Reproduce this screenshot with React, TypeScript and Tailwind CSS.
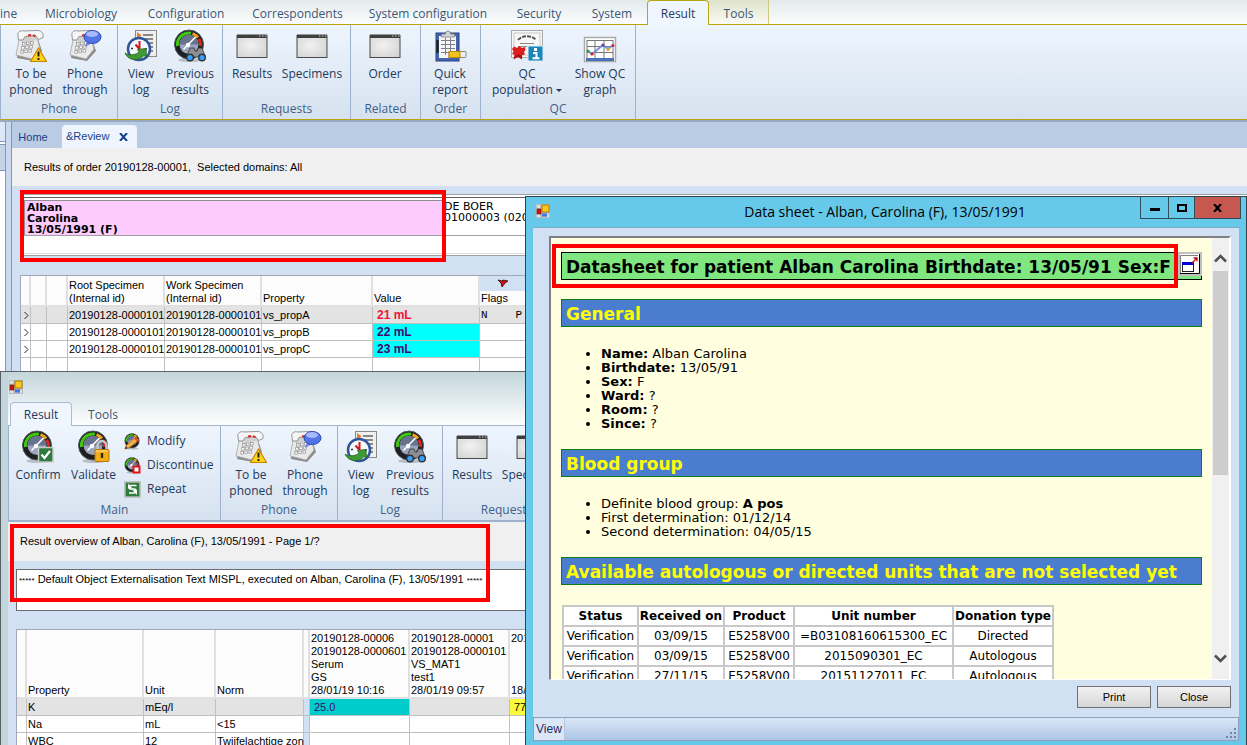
import React from "react";

type Kids = { children?: React.ReactNode };

/* ---------- icons ---------- */

function PhoneBase() {
  return (
    <>
      <path d="M5 13 L24 10 L28 22 L19 32 L3 29 Z" fill="#8b8b8b" />
      <path d="M5 11 L23 8 L26 20 L18 30 L2 26 Z" fill="#e9e9e9" stroke="#a6a6a6" strokeWidth="0.8" />
      <path d="M7 7 L22 5 L24 11 L8 13 Z" fill="#cfcfcf" />
      <path d="M4 7 C3 3 6 1 10 2 L22 1.500 C27 1 30 4 29 8.500 L24.500 10.500 L21.500 6.500 L11 7.500 L9 11 L4.500 11 Z" fill="#f6f6f6" stroke="#8a8a8a" strokeWidth="0.9" />
      <path d="M14 6.500 l3 -0.500 M19 6 l2.500 1.500" stroke="#d22" strokeWidth="2" />
      <g fill="#fff" stroke="#8d8d8d" strokeWidth="0.7">
        {[0, 1, 2].map((r) =>
          [0, 1, 2].map((c) => <rect key={`${r}${c}`} x={8.5 + c * 4 - r * 0.8} y={13.5 + r * 4 - c * 0.5} width="2.600" height="2.600" />)
        )}
      </g>
    </>
  );
}
function PhoneWarn() {
  return (
    <svg width="34" height="34" viewBox="0 0 34 34" aria-hidden="true">
      <PhoneBase />
      <path d="M24.500 19 L32.500 32.500 L16.500 32.500 Z" fill="#ffd21c" stroke="#c98500" strokeWidth="1.2" strokeLinejoin="round" />
      <path d="M24.500 22.500 v5 M24.500 29 v2" stroke="#222" strokeWidth="2" />
    </svg>
  );
}
function PhoneTalk() {
  return (
    <svg width="34" height="34" viewBox="0 0 34 34" aria-hidden="true">
      <PhoneBase />
      <path d="M19 12 L17 18 L24 14 Z" fill="#6b86e8" />
      <ellipse cx="24.500" cy="8" rx="8.500" ry="6.500" fill="#5374e6" stroke="#2c49b4" />
      <ellipse cx="24" cy="5" rx="6" ry="3" fill="#bccbff" opacity="0.8" />
    </svg>
  );
}
function ViewLog() {
  return (
    <svg width="34" height="34" viewBox="0 0 34 34" aria-hidden="true">
      <rect x="11.500" y="1.500" width="21" height="26" fill="#efefef" stroke="#8a8a8a" />
      <path d="M19 6 h10 M20 10 h9 M23 14 h6 M25 18 h4 M25 22 h4" stroke="#666" strokeWidth="1.300" />
      <path d="M13 3 l4.500 3.500 l-4.500 3.500 Z" fill="#ee7a1a" />
      <circle cx="15" cy="20" r="11" fill="#f5f8fc" stroke="#31549b" strokeWidth="2.500" />
      <path d="M15.500 20 V12 M15.500 20 L11.500 15.500" stroke="#d21919" strokeWidth="2" />
      <path d="M7 19.500 h2 M21 20 h2 M15 29 v-2" stroke="#333" strokeWidth="1.500" />
      <path d="M1 24 C5 27 12 26 15 23 L13.500 20.500 L22 19.500 L22.500 28 L20 26.500 C15 32.500 4 32 1 24 Z" fill="#3f9a35" stroke="#206a1c" strokeWidth="0.8" />
    </svg>
  );
}
function GaugeFace() {
  return (
    <>
      <ellipse cx="17" cy="31" rx="12" ry="2" fill="#000" opacity="0.2" />
      <circle cx="16" cy="15.500" r="14.500" fill="#1d1f22" stroke="#55585e" />
      <circle cx="16" cy="15.500" r="9.500" fill="#9aa5bd" />
      <path d="M6.500 15.500 A9.500 9.500 0 0 1 25.500 15.500 Z" fill="#66728e" />
      <path d="M4.500 17 A11.500 11.500 0 0 1 18 4.200" fill="none" stroke="#3fc714" strokeWidth="3" />
      <path d="M19.500 4.600 A11.500 11.500 0 0 1 25 8.500" fill="none" stroke="#f5a41a" strokeWidth="3" />
      <path d="M25.800 9.800 A11.500 11.500 0 0 1 27.500 17" fill="none" stroke="#df2419" strokeWidth="3" />
      <path d="M10.500 20.500 L22.500 8" stroke="#fff" strokeWidth="1.600" />
      <circle cx="15" cy="16" r="2.200" fill="#fff" />
    </>
  );
}
function GaugeBino() {
  return (
    <svg width="34" height="34" viewBox="0 0 34 34" aria-hidden="true">
      <GaugeFace />
      <path d="M13.500 28 L17 19 h4 l1 3 h2 l1 -3 h4 L32.500 28 Z" fill="#8d9097" stroke="#333" strokeWidth="0.800" />
      <circle cx="17" cy="28.500" r="4" fill="#333" />
      <circle cx="29" cy="28.500" r="4" fill="#333" />
      <circle cx="17" cy="28.500" r="2.600" fill="#35a0ff" />
      <circle cx="29" cy="28.500" r="2.600" fill="#35a0ff" />
    </svg>
  );
}
function GaugeCheck() {
  return (
    <svg width="34" height="34" viewBox="0 0 34 34" aria-hidden="true">
      <GaugeFace />
      <rect x="17.500" y="17.500" width="14.500" height="14.500" fill="#2f7a40" stroke="#c7ccc7" strokeWidth="1.500" />
      <path d="M20.500 24.500 l3 3.500 l5.500 -7" fill="none" stroke="#fff" strokeWidth="2.200" />
    </svg>
  );
}
function GaugeLock() {
  return (
    <svg width="34" height="34" viewBox="0 0 34 34" aria-hidden="true">
      <GaugeFace />
      <path d="M20.500 20 v-4 a4.500 5 0 0 1 9 0 v4" fill="none" stroke="#c3c7cd" strokeWidth="2.500" />
      <rect x="18" y="19.500" width="14" height="12" rx="1" fill="#f0ae1c" stroke="#b87906" />
      <path d="M19 21 h12" stroke="#ffe08a" />
      <path d="M25 23 v5" stroke="#3a2a00" strokeWidth="2.400" />
    </svg>
  );
}
function GaugePen() {
  return (
    <svg width="17" height="17" viewBox="0 0 34 34" aria-hidden="true">
      <GaugeFace />
      <path d="M2 32 L5 24 L24 8 L30 14 L10 30 Z" fill="#f4b23b" stroke="#a14a12" strokeWidth="1.500" />
      <path d="M2 32 L4 27 L7 30 Z" fill="#222" />
      <path d="M22 10 L28 16" stroke="#e2403a" strokeWidth="4" />
    </svg>
  );
}
function GaugeStop() {
  return (
    <svg width="17" height="17" viewBox="0 0 34 34" aria-hidden="true">
      <GaugeFace />
      <rect x="17" y="17" width="16" height="16" fill="#e01414" />
      <rect x="21" y="21" width="8" height="8" fill="#fff" />
    </svg>
  );
}
function RepeatIcon() {
  return (
    <svg width="17" height="17" viewBox="0 0 17 17" aria-hidden="true">
      <rect x="1" y="1" width="15" height="15" fill="#2f7a3d" stroke="#b4bbb4" strokeWidth="1.500" />
      <path d="M12.500 4.500 H7 a1.800 1.800 0 0 0 0 3.600 h3 a2 2 0 0 1 0 4 H5" fill="none" stroke="#fff" strokeWidth="1.500" />
      <path d="M4 2.500 v5 h4.500 Z M13 14 v-5 h-4.500 Z" fill="#fff" />
    </svg>
  );
}
function WindowIcon() {
  return (
    <svg width="34" height="34" viewBox="0 0 34 34" aria-hidden="true">
      <defs>
        <radialGradient id="pane" cx="0.45" cy="0.45" r="0.75">
          <stop offset="0" stopColor="#f2f2f2" />
          <stop offset="1" stopColor="#d0d0d0" />
        </radialGradient>
      </defs>
      <rect x="2" y="6.500" width="30" height="22" fill="url(#pane)" stroke="#4a4a4a" />
      <path d="M2 5.500 h30 v3.500 h-30 Z" fill="#3f3f3f" />
      <path d="M24 7 h1.500 M27 7 h1.500 M30 7 h1.500" stroke="#ccc" />
    </svg>
  );
}
function Clipboard() {
  return (
    <svg width="34" height="34" viewBox="0 0 34 34" aria-hidden="true">
      <rect x="3" y="4" width="23" height="28" fill="#4465ae" stroke="#27417f" />
      <rect x="6" y="7" width="17" height="22" fill="#f6f6f6" />
      <path d="M8 11.500 h14 M8 15.500 h14 M8 19.500 h14 M8 23.500 h10 M12.500 9 v17 M17.500 9 v14" stroke="#7a7f8a" />
      <path d="M8.500 8 V5 h4 a2.500 3 0 0 1 5 0 h4 V8 Z" fill="#d4d7dc" stroke="#777" strokeWidth="0.800" />
      <path d="M4.500 11 v13" stroke="#222" strokeWidth="2.500" />
      <rect x="16" y="22.500" width="17" height="6" rx="1" fill="#eee" stroke="#8a8a8a" />
      <rect x="16" y="22.500" width="11" height="6" fill="#f2c21d" stroke="#b88a08" />
    </svg>
  );
}
function Certificate() {
  return (
    <svg width="34" height="34" viewBox="0 0 34 34" aria-hidden="true">
      <rect x="1.500" y="1.500" width="31" height="27" fill="#f7f7f7" stroke="#a9a9a9" />
      <rect x="4" y="4" width="26" height="22" fill="none" stroke="#c6c6c6" />
      <path d="M8 11 C12 6 22 6 26 11" fill="none" stroke="#555" strokeWidth="2" strokeDasharray="4 1" />
      <path d="M10 14.500 h14 M8 17.500 h9" stroke="#888" />
      <path d="M5 24 L3.500 30.500 L8 28 L12 30.500 L12 24 Z" fill="#b50f0f" />
      <path d="M2 20 l2 -2.500 l3 1.500 l2 -2 l3 2 l3 -1 l0.500 3 l-1.500 2 l1 2.500 l-4 1 l-2 -1.500 l-3 1.500 l-4 -1.500 l1.500 -2.500 Z" fill="#dc1e1e" />
      <rect x="18" y="17" width="15" height="15" fill="#1a86bd" stroke="#ddeaf2" />
      <path d="M25.500 19 v3" stroke="#fff" strokeWidth="3" />
      <path d="M23 24 h3.500 v5 M22.500 29.300 h7" fill="none" stroke="#fff" strokeWidth="2" />
    </svg>
  );
}
function Chart() {
  return (
    <svg width="34" height="34" viewBox="0 0 34 34" aria-hidden="true">
      <rect x="1.500" y="8.500" width="31" height="24" fill="#fff" stroke="#aaa" strokeWidth="1.500" />
      <rect x="3" y="29" width="28" height="3" fill="#4a73b9" />
      <path d="M4 11.500 h26 M4 17.500 h26 M4 23.500 h26 M4 11 v18 M12 11 v18 M21 11 v18 M30 11 v18" stroke="#777" />
      <path d="M5 22 L9 25 L20 16 L25 20 L30 16" fill="none" stroke="#6c8fd6" strokeWidth="1.800" />
      <circle cx="5" cy="22" r="1.600" fill="#2b9e3f" />
      <circle cx="9" cy="25" r="1.600" fill="#d22" />
      <circle cx="20" cy="16" r="1.600" fill="#7a3fa8" />
      <circle cx="25" cy="20.500" r="1.600" fill="#f0a818" />
      <circle cx="30" cy="16.500" r="1.600" fill="#d2285a" />
    </svg>
  );
}
function AppIcon() {
  return (
    <svg width="14" height="14" viewBox="0 0 14 14" aria-hidden="true">
      <path d="M0 0 h14 v14 h-14 Z" fill="#bdbdbd" />
      <path d="M1 1 h3 v3 h-3 Z M1 10 h3 v3 h-3 Z M11 10 h2 v3 h-2 Z" fill="#dbe3e6" />
      <rect x="1" y="5" width="4" height="5" fill="#c11a0e" stroke="#7d0d06" strokeWidth="0.600" />
      <rect x="6" y="1" width="7" height="7" fill="#f9c81d" stroke="#b07d00" />
      <rect x="6" y="9.500" width="5" height="3" fill="#3c78ec" />
    </svg>
  );
}

/* ---------- ribbon ---------- */

function BigButton({ icon, label, width }: { icon: React.ReactNode; label: React.ReactNode; width: string }) {
  return (
    <button type="button" className={`flex shrink-0 flex-col items-center text-xs leading-4 ${width}`}>
      {icon}
      <span className="mt-[3px] whitespace-nowrap text-[#1e395b]">{label}</span>
    </button>
  );
}
function Group({ title, width, children }: Kids & { title: string; width: string }) {
  return (
    <section
      aria-label={title}
      className={`flex shrink-0 flex-col justify-between border-r border-[#9fb2cd] bg-linear-to-b from-[#eef5fd] to-[#d6e2f0] ${width}`}
    >
      <div className="flex pt-1">{children}</div>
      <h2 className="pb-0.5 text-center text-xs leading-4 text-[#3f5f86]">{title}</h2>
    </section>
  );
}
const TwoLines = ({ a, b }: { a: string; b: React.ReactNode }) => (
  <>
    {a}
    <br />
    {b}
  </>
);

function SharedGroups() {
  return (
    <>
      <Group title="Phone" width="w-[117px]">
        <BigButton icon={<PhoneWarn />} width="w-[60px]" label={<TwoLines a="To be" b="phoned" />} />
        <BigButton icon={<PhoneTalk />} width="w-[48px]" label={<TwoLines a="Phone" b="through" />} />
      </Group>
      <Group title="Log" width="w-[105px]">
        <BigButton icon={<ViewLog />} width="w-[46px]" label={<TwoLines a="View" b="log" />} />
        <BigButton icon={<GaugeBino />} width="w-[52px]" label={<TwoLines a="Previous" b="results" />} />
      </Group>
      <Group title="Requests" width="w-[128px]">
        <BigButton icon={<WindowIcon />} width="w-[58px]" label="Results" />
        <BigButton icon={<WindowIcon />} width="w-[62px]" label="Specimens" />
      </Group>
    </>
  );
}

const menuTabs = [
  { label: "ine", width: "w-[30px] justify-start!" },
  { label: "Microbiology", width: "w-[102px]" },
  { label: "Configuration", width: "w-[108px]" },
  { label: "Correspondents", width: "w-[115px]" },
  { label: "System configuration", width: "w-[146px]" },
  { label: "Security", width: "w-[76px]" },
  { label: "System", width: "w-[70px]" },
];

function MainRibbon() {
  return (
    <header className="font-['Open_Sans',sans-serif]">
      <nav className="flex h-[25px] border-b border-[#b8a70c] bg-linear-to-b from-[#e3eaec] to-[#fcfdfd] text-xs text-[#3c5676]">
        {menuTabs.map((t) => (
          <button type="button" key={t.label} className={`flex shrink-0 items-center justify-center whitespace-nowrap pt-1 ${t.width}`}>
            {t.label}
          </button>
        ))}
        <button type="button" className="-mb-px w-[62px] rounded-t-sm border border-b-0 border-[#b8a70c] bg-[#f0f6fe] pt-0.5 text-[#1e395b]">
          Result
        </button>
        <button type="button" className="w-[60px] border-r border-[#cfc97a] bg-linear-to-b from-[#dfe3cb] to-[#fafbf4] pt-1">
          Tools
        </button>
      </nav>
      <div className="flex h-[95px] border-b border-l border-b-[#b8a70c] border-l-[#9fb2cd] bg-linear-to-b from-[#eef5fd] to-[#d6e2f0]">
        <SharedGroups />
        <Group title="Related" width="w-[70px]">
          <BigButton icon={<WindowIcon />} width="w-[68px]" label="Order" />
        </Group>
        <Group title="Order" width="w-[60px]">
          <BigButton icon={<Clipboard />} width="w-[58px]" label={<TwoLines a="Quick" b="report" />} />
        </Group>
        <Group title="QC" width="w-[155px]">
          <BigButton
            icon={<Certificate />}
            width="w-[92px]"
            label={
              <TwoLines
                a="QC"
                b={
                  <>
                    population <span className="inline-block border-x-3 border-t-3 border-x-transparent border-t-[#1e395b] align-middle" />
                  </>
                }
              />
            }
          />
          <BigButton icon={<Chart />} width="w-[54px]" label={<TwoLines a="Show QC" b="graph" />} />
        </Group>
      </div>
    </header>
  );
}

/* ---------- order results ---------- */

const th = "border-b-2 border-r-2 border-[#e0e0e0] bg-[#fcfcfc] px-px align-bottom text-left font-normal leading-[13px] whitespace-pre";
const td = "h-[17px] border-b border-r border-[#c0c0c0] pl-px leading-4 whitespace-nowrap";

const orderRows = [
  { property: "vs_propA", value: "21 mL" },
  { property: "vs_propB", value: "22 mL" },
  { property: "vs_propC", value: "23 mL" },
];

function OrderTable() {
  return (
    <table className="w-full table-fixed border-separate border-spacing-0 border-l border-t border-[#a0a8b8] bg-white text-[11px] text-black">
      <colgroup>
        <col className="w-[10px]" />
        <col className="w-[16px]" />
        <col className="w-[21px]" />
        <col className="w-[97px]" />
        <col className="w-[97px]" />
        <col className="w-[111px]" />
        <col className="w-[107px]" />
        <col />
      </colgroup>
      <thead>
        <tr className="h-[31px]">
          <th className={th} />
          <th className={th} />
          <th className={th} />
          <th className={th}>{"Root Specimen\n(Internal id)"}</th>
          <th className={th}>{"Work Specimen\n(Internal id)"}</th>
          <th className={th}>Property</th>
          <th className={th}>Value</th>
          <th className={th}>
            <div className="-mx-px flex h-[15px] items-center bg-[#d2e0f4] pl-[18px]">
              <svg width="11" height="9" viewBox="0 0 11 9" aria-hidden="true">
                <path d="M0 1 L4 2 L5 1 L10 2 L7 4 L4 8 L3 4 Z" fill="#d31212" stroke="#2a0505" strokeWidth="0.800" />
              </svg>
            </div>
            <div className="pt-px">Flags</div>
          </th>
        </tr>
      </thead>
      <tbody>
        {orderRows.map((r, i) => (
          <tr key={r.property} className={i === 0 ? "bg-[#e3e3e3]" : "bg-white"}>
            <td className={td}>
              <svg width="5" height="9" viewBox="0 0 5 9" className="ml-0.5" aria-hidden="true">
                <path d="M0.500 1 L4 4.500 L0.500 8" fill="none" stroke="#222" />
              </svg>
            </td>
            <td className={td} />
            <td className={td} />
            <td className={td}>20190128-0000101</td>
            <td className={td}>20190128-0000101</td>
            <td className={td}>{r.property}</td>
            <td className={`${td} pl-1! text-xs leading-4! font-bold ${i === 0 ? "text-[#f0143c]" : "bg-[#00ffff] text-[#3c0a6e]"}`}>{r.value}</td>
            <td className={td}>
              {i === 0 && (
                <span className="flex gap-7 font-['Liberation_Mono',monospace]">
                  <span>N</span>
                  <span>P</span>
                </span>
              )}
            </td>
          </tr>
        ))}
        <tr>
          {Array.from({ length: 8 }, (_, i) => (
            <td key={i} className={td} />
          ))}
        </tr>
      </tbody>
    </table>
  );
}

function MainWindow() {
  return (
    <div className="flex min-h-0 flex-1 border-t-2 border-[#9aa9bf] bg-[#c9daf0]">
      <aside className="w-[5px] shrink-0 bg-white">
        <div className="h-5 border-b border-[#8097be] bg-[#dce8f6]" />
        <div className="mt-0.5 h-[27px] border-y border-[#8097be] bg-[#c6d4e8]" />
      </aside>
      <div className="w-[7px] shrink-0 border-x border-[#8097be] bg-[#c9daf0]" />
      <main className="min-w-0 flex-1 bg-[#d2e0f4]">
        <div className="flex h-[26px] items-end bg-[#b9cce4] text-[11px] text-[#1a428a]">
          <button type="button" className="h-[22px] w-[50px] pr-2">
            Home
          </button>
          <div className="flex h-[23px] w-[75px] items-center gap-2.5 rounded-t-sm bg-[#eef5fe] pl-1">
            <button type="button">&amp;Review</button>
            <button type="button" aria-label="Close tab">
              <svg width="9" height="8" viewBox="0 0 9 8" aria-hidden="true">
                <path d="M1 0 L8 8 M8 0 L1 8" stroke="#14418c" strokeWidth="2" />
              </svg>
            </button>
          </div>
        </div>
        <div className="flex h-[38px] items-center bg-[#f0f0f0] pl-3 text-[11px] whitespace-pre text-black">
          {"Results of order 20190128-00001,  Selected domains: All"}
        </div>
        <div className="ml-2 mt-2 h-[62px] border-y border-[#a0a0a0] bg-white pt-0.5 font-['DejaVu_Sans',sans-serif] text-[11px] leading-[11px] text-black">
          <div className="h-[57px] border-b border-t border-b-[#dcdcdc] border-t-[#606060] pl-1 pt-0.5">
            <div className="flex h-[36px] border-b border-[#a0a0a0]">
              <div className="w-[418px] shrink-0 border-l border-t border-[#909090] bg-[#fecbfe] pl-0.5 pt-px font-bold">
                Alban
                <br />
                Carolina
                <br />
                13/05/1991 (F)
              </div>
              <div className="pl-0.5 pt-px whitespace-nowrap">
                DE BOER
                <br />
                01000003 (02000)
              </div>
            </div>
          </div>
        </div>
        <div className="ml-2 mt-[19px]">
          <OrderTable />
        </div>
      </main>
    </div>
  );
}

/* ---------- result overview window ---------- */

const overviewRows = [
  { property: "K", unit: "mEq/l", norm: "", a: "25.0", c: "77" },
  { property: "Na", unit: "mL", norm: "<15", a: "", c: "" },
  { property: "WBC", unit: "12", norm: "Twijfelachtige zon", a: "", c: "" },
];

function OverviewTable() {
  return (
    <table className="w-full table-fixed border-separate border-spacing-0 border-l border-t border-[#a0a8b8] bg-white text-[11px] text-black">
      <colgroup>
        <col className="w-[10px]" />
        <col className="w-[117px]" />
        <col className="w-[72px]" />
        <col className="w-[88px]" />
        <col className="w-[6px]" />
        <col className="w-[100px]" />
        <col className="w-[100px]" />
        <col />
      </colgroup>
      <thead>
        <tr className="h-[69px]">
          <th className={th} />
          <th className={th}>Property</th>
          <th className={th}>Unit</th>
          <th className={th}>Norm</th>
          <th className={`${th} px-0!`} />
          <th className={th}>{"20190128-00006\n20190128-0000601\nSerum\nGS\n28/01/19 10:16"}</th>
          <th className={th}>{"20190128-00001\n20190128-0000101\nVS_MAT1\ntest1\n28/01/19 09:57"}</th>
          <th className={th}>{"201\n\u00a0\n\u00a0\n\u00a0\n18/"}</th>
        </tr>
      </thead>
      <tbody>
        {overviewRows.map((r, i) => (
          <tr key={r.property} className={i === 0 ? "bg-[#e3e3e3]" : "bg-white"}>
            <td className={td} />
            <td className={td}>{r.property}</td>
            <td className={td}>{r.unit}</td>
            <td className={td}>{r.norm}</td>
            <td className={`${td} bg-[#d2e0f4] px-0!`} />
            <td className={`${td} pl-1! ${r.a ? "bg-[#00cccc] text-[#3c0a6e]" : ""}`}>{r.a}</td>
            <td className={td} />
            <td className={`${td} pl-1! ${r.c ? "bg-[#fafa3c]" : ""}`}>{r.c}</td>
          </tr>
        ))}
      </tbody>
    </table>
  );
}

const smallButtons = [
  { label: "Modify", icon: <GaugePen /> },
  { label: "Discontinue", icon: <GaugeStop /> },
  { label: "Repeat", icon: <RepeatIcon /> },
];

function OverviewWindow() {
  return (
    <section
      aria-label="Result overview"
      className="absolute inset-x-0 bottom-0 top-[371px] overflow-hidden border-l border-t border-[#5a6068] bg-[#c3d6dc] pl-[7px]"
    >
      <div className="bg-linear-to-b from-[#c3d6dc] to-white pt-2 font-['Open_Sans',sans-serif] text-xs text-[#3c5676]">
        <div className="flex h-[22px] pl-px">
          <AppIcon />
        </div>
        <div className="flex h-[24px] border-b border-[#a3b6cf]">
          <button type="button" className="-mb-px ml-0.5 w-[62px] rounded-t-sm border border-b-0 border-[#a9bcd6] bg-[#f0f6fe] text-[#1e395b]">
            Result
          </button>
          <button type="button" className="w-[62px] pt-0.5">
            Tools
          </button>
        </div>
      </div>
      <div className="flex h-[96px] border-b-2 border-l border-[#9fb2cd] bg-linear-to-b from-[#eef5fd] to-[#d6e2f0] font-['Open_Sans',sans-serif]">
        <Group title="Main" width="w-[212px]">
          <BigButton icon={<GaugeCheck />} width="w-[58px]" label="Confirm" />
          <BigButton icon={<GaugeLock />} width="w-[53px]" label="Validate" />
          <div className="-mt-px flex flex-col pl-1 text-xs text-[#1e395b]">
            {smallButtons.map((b) => (
              <button type="button" key={b.label} className="flex h-6 items-center gap-1.5">
                {b.icon}
                {b.label}
              </button>
            ))}
          </div>
        </Group>
        <SharedGroups />
      </div>
      <div className="h-full bg-[#d2e0f4]">
        <div className="flex h-[39px] items-center bg-[#f0f0f0] pl-3 text-[11px] text-black">
          Result overview of Alban, Carolina (F), 13/05/1991 - Page 1/?
        </div>
        <div className="mx-2 mt-2 h-[42px] border border-[#6c6c6c] bg-white px-0.5 py-[3px] text-[11px] leading-3 whitespace-nowrap text-black">
          <span className="text-[8px]">*****</span> Default Object Externalisation Text MISPL, executed on Alban, Carolina (F), 13/05/1991{" "}
          <span className="text-[8px]">*****</span>
        </div>
        <div className="mx-2 mt-[18px]">
          <OverviewTable />
        </div>
      </div>
    </section>
  );
}

/* ---------- data sheet dialog ---------- */

function Heading({ children }: Kids) {
  return <h2 className="flex h-7 items-center border border-[#107c10] bg-[#4b7dce] px-1 pt-0.5 text-[17px] font-bold whitespace-nowrap text-[#ffff00]">{children}</h2>;
}

const facts = [
  ["Name:", "Alban Carolina"],
  ["Birthdate:", "13/05/91"],
  ["Sex:", "F"],
  ["Ward:", "?"],
  ["Room:", "?"],
  ["Since:", "?"],
];

const units = [
  ["Verification", "03/09/15", "E5258V00", "=B03108160615300_EC", "Directed"],
  ["Verification", "03/09/15", "E5258V00", "2015090301_EC", "Autologous"],
  ["Verification", "27/11/15", "E5258V00", "20151127011_EC", "Autologous"],
];

function Sheet() {
  return (
    <div className="min-w-0 flex-1 overflow-hidden pl-[10px] pr-[10px] pt-[14px] font-['DejaVu_Sans',sans-serif] text-[13px] leading-[14px]">
      <div className="flex h-7 items-start justify-between border border-black bg-[#80e680] pl-1">
        <h1 className="text-[17px] leading-[28px] font-bold whitespace-nowrap">Datasheet for patient Alban Carolina Birthdate: 13/05/91 Sex:F</h1>
        <button type="button" aria-label="Open in new window" className="-mr-px -mt-px h-6 w-6 shrink-0 bg-[#c0c0c0] p-0.5">
          <svg width="20" height="20" viewBox="0 0 20 20" aria-hidden="true">
            <path d="M0 0 h20 v20 h-20 Z" fill="#fff" />
            <path d="M0.500 19 V1.500 H18" fill="none" stroke="#808080" />
            <path d="M19.500 0 V19.500 H0" fill="none" stroke="#000" />
            <rect x="2.500" y="8.500" width="11" height="9" fill="#fff" stroke="#222" />
            <rect x="2" y="8" width="12" height="3" fill="#0000d0" />
            <path d="M12 9 L17 4 M13.500 4 h3.500 v3.500" fill="none" stroke="#c01010" strokeWidth="1.300" />
          </svg>
        </button>
      </div>
      <div className="mt-[19px]">
        <Heading>General</Heading>
      </div>
      <ul className="mt-5 list-disc pl-10">
        {facts.map(([k, v]) => (
          <li key={k}>
            <b>{k}</b> {v}
          </li>
        ))}
      </ul>
      <div className="mt-[18px]">
        <Heading>Blood group</Heading>
      </div>
      <ul className="mt-5 list-disc pl-10">
        <li>
          Definite blood group: <b>A pos</b>
        </li>
        <li>First determination: 01/12/14</li>
        <li>Second determination: 04/05/15</li>
      </ul>
      <div className="mt-[18px]">
        <Heading>Available autologous or directed units that are not selected yet</Heading>
      </div>
      <table className="mt-5 ml-px w-[492px] table-fixed border-separate border-spacing-0.5 bg-[#c8c8c8] text-center text-xs">
        <colgroup>
          <col className="w-[73px]" />
          <col className="w-[84px]" />
          <col className="w-[68px]" />
          <col className="w-[157px]" />
          <col />
        </colgroup>
        <thead>
          <tr className="h-[18px] bg-white">
            {["Status", "Received on", "Product", "Unit number", "Donation type"].map((h) => (
              <th key={h} className="whitespace-nowrap">
                {h}
              </th>
            ))}
          </tr>
        </thead>
        <tbody>
          {units.map((u, i) => (
            <tr key={i} className="h-[18px] bg-white">
              {u.map((c, j) => (
                <td key={j} className="whitespace-nowrap">
                  {c}
                </td>
              ))}
            </tr>
          ))}
        </tbody>
      </table>
    </div>
  );
}

function DataSheetDialog() {
  const caption = "flex h-[22px] items-center justify-center border border-t-0 border-[#2d4f5c]";
  const push = "h-[22px] w-[74px] border border-[#707070] bg-linear-to-b from-[#f2f2f2] to-[#d6d6d6] text-[11px]";
  return (
    <section
      role="dialog"
      aria-label="Data sheet"
      className="absolute bottom-0 left-[525px] right-0 top-[196px] flex flex-col overflow-hidden border border-b-0 border-[#31444d] bg-[#66c9ea] px-[7px] pb-1 text-black"
    >
      <div className="flex h-[30px] items-start pl-[3px]">
        <div className="w-[94px] pt-[7px]">
          <AppIcon />
        </div>
        <h2 className="flex-1 text-center font-['Open_Sans',sans-serif] text-sm leading-[30px]">Data sheet - Alban, Carolina (F), 13/05/1991</h2>
        <div className="-mr-0.5 flex">
          <button type="button" aria-label="Minimize" className={`${caption} w-[29px]`}>
            <span className="mt-1 h-[3px] w-2.5 bg-black" />
          </button>
          <button type="button" aria-label="Maximize" className={`${caption} -ml-px w-[27px]`}>
            <span className="h-2 w-2.5 border-2 border-black" />
          </button>
          <button type="button" aria-label="Close" className={`${caption} -ml-px w-[47px] bg-[#c75850]`}>
            <svg width="9" height="8" viewBox="0 0 9 8" aria-hidden="true">
              <path d="M1 0 L8 8 M8 0 L1 8" stroke="#000" strokeWidth="2.200" />
            </svg>
          </button>
        </div>
      </div>
      <div className="flex min-h-0 flex-1 flex-col border-t border-[#7ea9c0] bg-[#d2e0f4]">
        <div className="ml-4 mr-2 mt-2 flex min-h-0 flex-1 border-b border-l-2 border-r-2 border-t-2 border-b-white border-l-[#808080] border-r-white border-t-[#808080] bg-[#ffffdf]">
          <Sheet />
          <div className="flex w-[17px] shrink-0 flex-col items-center bg-[#f0f0f0] pb-4 pt-4">
            <svg width="13" height="9" viewBox="0 0 13 9" aria-hidden="true">
              <path d="M1 7.500 L6.500 2 L12 7.500" fill="none" stroke="#505050" strokeWidth="2.500" />
            </svg>
            <div className="mt-2 h-[204px] w-[15px] bg-[#cdcdcd]" />
            <svg width="13" height="9" viewBox="0 0 13 9" className="mt-auto" aria-hidden="true">
              <path d="M1 1.500 L6.500 7 L12 1.500" fill="none" stroke="#505050" strokeWidth="2.500" />
            </svg>
          </div>
        </div>
        <div className="flex justify-end gap-1.5 pb-2 pr-2 pt-1.5">
          <button type="button" className={push}>
            Print
          </button>
          <button type="button" className={push}>
            Close
          </button>
        </div>
        <footer className="mt-px flex h-6 items-center justify-between border border-[#8ba0bd] bg-linear-to-b from-[#d9e6f6] via-[#c4d6ee] to-[#aec6e6] text-xs text-[#2a2a6a]">
          <span className="flex h-full items-center border-r border-[#b4c6de] bg-[#dbe7f6] px-0.5">View</span>
          <svg width="12" height="12" viewBox="0 0 12 12" className="self-end" aria-hidden="true">
            <path d="M8 0 h2 v2 h-2 Z M8 4 h2 v2 h-2 Z M4 4 h2 v2 h-2 Z M8 8 h2 v2 h-2 Z M4 8 h2 v2 h-2 Z M0 8 h2 v2 h-2 Z" fill="#6f86a8" />
          </svg>
        </footer>
      </div>
    </section>
  );
}

export default function App() {
  return (
    <div className="relative flex h-screen flex-col overflow-hidden bg-[#d2e0f4] font-['Liberation_Sans',sans-serif]">
      <MainRibbon />
      <MainWindow />
      <OverviewWindow />
      <DataSheetDialog />
      <div className="pointer-events-none absolute left-5 top-[190px] h-[72px] w-[426px] border-4 border-[#ff0000]" />
      <div className="pointer-events-none absolute left-2.5 top-[524px] h-[78px] w-[480px] border-4 border-[#ff0000]" />
      <div className="pointer-events-none absolute left-[552px] top-[244px] h-11 w-[626px] border-4 border-[#ff0000]" />
    </div>
  );
}
